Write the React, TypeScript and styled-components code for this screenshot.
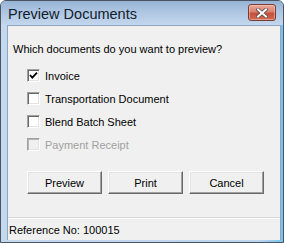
import { FC } from 'react';
import styled, { createGlobalStyle } from 'styled-components';

const GlobalStyle = createGlobalStyle`
  html, body {
    margin: 0;
    padding: 0;
    background: #ffffff;
  }
  * {
    box-sizing: border-box;
  }
`;

const DOCUMENTS = [
  { label: 'Invoice', checked: true, disabled: false },
  { label: 'Transportation Document', checked: false, disabled: false },
  { label: 'Blend Batch Sheet', checked: false, disabled: false },
  { label: 'Payment Receipt', checked: false, disabled: true },
];

const App: FC = () => {
  return (
    <>
      <GlobalStyle />
      <Window>
        <TitleBar>
          <Title>Preview Documents</Title>
          <CloseButton aria-label="Close">
            <svg width="12" height="10" viewBox="0 0 12 10">
              <path
                d="M2 1.5 L10 8.5 M10 1.5 L2 8.5"
                stroke="#5a4a48"
                strokeWidth="3.6"
                strokeLinecap="square"
              />
              <path
                d="M2 1.5 L10 8.5 M10 1.5 L2 8.5"
                stroke="#ffffff"
                strokeWidth="2"
                strokeLinecap="square"
              />
            </svg>
          </CloseButton>
        </TitleBar>
        <Frame>
          <Client>
            <Question>Which documents do you want to preview?</Question>
            <CheckList>
              {DOCUMENTS.map((doc) => (
                <CheckRow key={doc.label} $disabled={doc.disabled}>
                  <Box $disabled={doc.disabled}>
                    {doc.checked && (
                      <svg width="9" height="9" viewBox="0 0 9 9">
                        <path
                          d="M1 4 L3.3 6.6 L8 1.6"
                          fill="none"
                          stroke="#000"
                          strokeWidth="1.8"
                        />
                      </svg>
                    )}
                  </Box>
                  <span>{doc.label}</span>
                </CheckRow>
              ))}
            </CheckList>
            <ButtonRow>
              <Button>Preview</Button>
              <Button>Print</Button>
              <Button>Cancel</Button>
            </ButtonRow>
            <Spacer />
            <StatusBar>Reference No: 100015</StatusBar>
          </Client>
        </Frame>
      </Window>
    </>
  );
};

// Styles
const Window = styled.div`
  width: 284px;
  height: 243px;
  display: flex;
  flex-direction: column;
  border: 1px solid #4a5563;
  border-radius: 6px 6px 0 0;
  background: linear-gradient(to right, #c4d8ee 0%, #bcd4ee 92%, #74c4ec 100%);
  overflow: hidden;
`;

const TitleBar = styled.div`
  height: 24px;
  flex: none;
  display: flex;
  align-items: flex-start;
  justify-content: space-between;
  padding: 0 7px 0 7px;
  background: linear-gradient(to bottom, #97b3d4 0%, #adc6e2 45%, #c3d7ed 100%);
`;

const Title = styled.div`
  font-family: 'Liberation Sans', Arial, sans-serif;
  font-size: 14.5px;
  line-height: 17px;
  color: #14202c;
  padding: 5px 0 0 0;
`;

const CloseButton = styled.div`
  width: 28px;
  height: 17px;
  margin-top: 3px;
  display: flex;
  align-items: center;
  justify-content: center;
  border: 1px solid #7b3a30;
  border-radius: 3px;
  background: linear-gradient(
    to bottom,
    #e9a99c 0%,
    #d9806f 45%,
    #c4503b 55%,
    #cf6a55 100%
  );
  box-shadow: inset 0 0 0 1px rgba(255, 220, 210, 0.45);
`;

const Frame = styled.div`
  flex: 1;
  display: flex;
  padding: 0 2px 2px 6px;
  min-height: 0;
`;

const Client = styled.div`
  flex: 1;
  display: flex;
  flex-direction: column;
  background: #f0f0f0;
  border: 1px solid #8fa6c2;
  border-bottom: none;
  font-family: 'Liberation Sans', Arial, sans-serif;
  font-size: 11px;
  color: #000;
`;

const Question = styled.div`
  margin-top: 17px;
  padding-left: 5px;
  line-height: 13px;
`;

const CheckList = styled.div`
  margin-top: 8px;
  padding-left: 19px;
  display: flex;
  flex-direction: column;
`;

const CheckRow = styled.div<{ $disabled: boolean }>`
  height: 23px;
  display: flex;
  align-items: center;
  gap: 5px;
  color: ${(p) => (p.$disabled ? '#a0a0a0' : '#000')};
`;

const Box = styled.div<{ $disabled: boolean }>`
  width: 13px;
  height: 13px;
  display: flex;
  align-items: center;
  justify-content: center;
  border: 1px solid;
  border-color: #a0a0a0 #ffffff #ffffff #a0a0a0;
  box-shadow: ${(p) =>
    p.$disabled
      ? 'inset 1px 1px #b5b5b5, inset -1px -1px #e3e3e3'
      : 'inset 1px 1px #696969, inset -1px -1px #e3e3e3'};
  background: ${(p) => (p.$disabled ? '#f0f0f0' : '#ffffff')};
`;

const ButtonRow = styled.div`
  margin-top: 15px;
  padding-left: 19px;
  display: flex;
  gap: 6px;
`;

const Button = styled.div`
  width: 75px;
  height: 23px;
  display: flex;
  align-items: center;
  justify-content: center;
  background: #f0f0f0;
  border: 1px solid;
  border-color: #ffffff #696969 #696969 #ffffff;
  box-shadow: inset -1px -1px #a0a0a0, inset 1px 1px #e3e3e3;
`;

const Spacer = styled.div`
  flex: 1;
`;

const StatusBar = styled.div`
  height: 23px;
  flex: none;
  display: flex;
  align-items: center;
  padding: 1px 0 0 1px;
  border-top: 1px solid #d7d7d7;
  box-shadow: inset 0 1px #ffffff;
`;

export default App;
